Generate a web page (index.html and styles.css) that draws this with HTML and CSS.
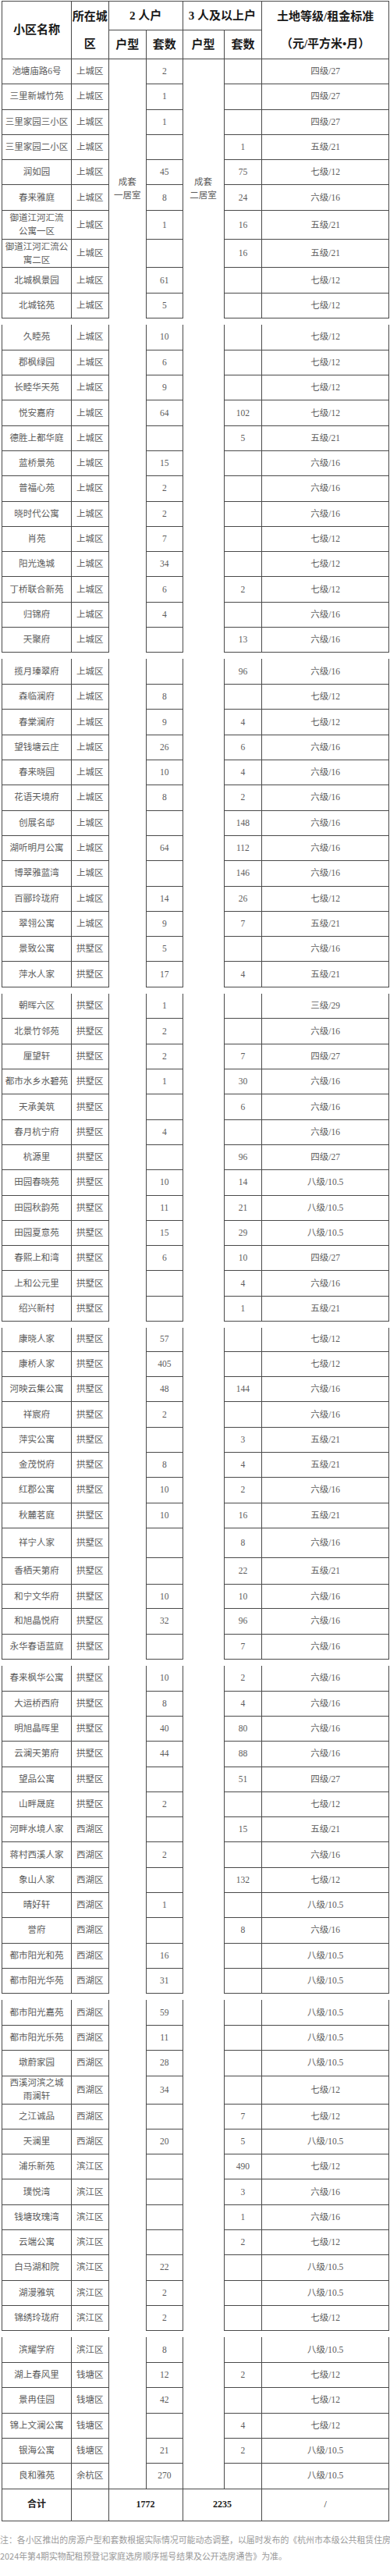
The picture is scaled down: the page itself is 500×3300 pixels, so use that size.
FILE: index.html
```html
<!DOCTYPE html>
<html lang="zh-CN">
<head>
<meta charset="utf-8">
<title>房源表</title>
<link rel="stylesheet" href="styles.css">
</head>
<body>
<main class="doc">
<div class="grid">

<table class="sec">
<colgroup><col class="c1"><col class="c2"><col class="c3"><col class="c4"><col class="c5"><col class="c6"><col class="c7"></colgroup>
<thead>
<tr class="hr"><th rowspan="2">小区名称</th><th rowspan="2" class="two">所在城<br>区</th><th colspan="2">2 人户</th><th colspan="2">3 人及以上户</th><th rowspan="2" class="two">土地等级/租金标准<br>（元/平方米•月）</th></tr>
<tr class="hr"><th>户型</th><th>套数</th><th>户型</th><th>套数</th></tr>
</thead>
<tbody>
<tr><td>池塘庙路6号</td><td>上城区</td><td class="m" rowspan="10">成套<br>一居室</td><td>2</td><td class="m" rowspan="10">成套<br>二居室</td><td></td><td>四级/27</td></tr>
<tr><td>三里新城竹苑</td><td>上城区</td><td>1</td><td></td><td>四级/27</td></tr>
<tr><td>三里家园三小区</td><td>上城区</td><td>1</td><td></td><td>四级/27</td></tr>
<tr><td>三里家园二小区</td><td>上城区</td><td></td><td>1</td><td>五级/21</td></tr>
<tr><td>润如园</td><td>上城区</td><td>45</td><td>75</td><td>七级/12</td></tr>
<tr><td>春来雅庭</td><td>上城区</td><td>8</td><td>24</td><td>六级/16</td></tr>
<tr class="h37"><td>御道江河汇流<br>公寓一区</td><td>上城区</td><td>1</td><td>16</td><td>五级/21</td></tr>
<tr class="h36"><td>御道江河汇流公<br>寓二区</td><td>上城区</td><td></td><td>16</td><td>五级/21</td></tr>
<tr><td>北城枫景园</td><td>上城区</td><td>61</td><td></td><td>七级/12</td></tr>
<tr><td>北城铭苑</td><td>上城区</td><td>5</td><td></td><td>七级/12</td></tr>
</tbody>
</table>

<table class="sec cont">
<colgroup><col class="c1"><col class="c2"><col class="c3"><col class="c4"><col class="c5"><col class="c6"><col class="c7"></colgroup>
<tbody>
<tr><td>久睦苑</td><td>上城区</td><td class="m" rowspan="13"></td><td>10</td><td class="m" rowspan="13"></td><td></td><td>七级/12</td></tr>
<tr><td>郡枫绿园</td><td>上城区</td><td>6</td><td></td><td>七级/12</td></tr>
<tr><td>长睦华天苑</td><td>上城区</td><td>9</td><td></td><td>七级/12</td></tr>
<tr><td>悦安嘉府</td><td>上城区</td><td>64</td><td>102</td><td>七级/12</td></tr>
<tr><td>德胜上都华庭</td><td>上城区</td><td></td><td>5</td><td>五级/21</td></tr>
<tr><td>蓝桥景苑</td><td>上城区</td><td>15</td><td></td><td>六级/16</td></tr>
<tr><td>普福心苑</td><td>上城区</td><td>2</td><td></td><td>六级/16</td></tr>
<tr><td>晓时代公寓</td><td>上城区</td><td>2</td><td></td><td>六级/16</td></tr>
<tr><td>肖苑</td><td>上城区</td><td>7</td><td></td><td>七级/12</td></tr>
<tr><td>阳光逸城</td><td>上城区</td><td>34</td><td></td><td>七级/12</td></tr>
<tr><td>丁桥联合新苑</td><td>上城区</td><td>6</td><td>2</td><td>七级/12</td></tr>
<tr><td>归锦府</td><td>上城区</td><td>4</td><td></td><td>六级/16</td></tr>
<tr><td>天聚府</td><td>上城区</td><td></td><td>13</td><td>六级/16</td></tr>
</tbody>
</table>

<table class="sec cont">
<colgroup><col class="c1"><col class="c2"><col class="c3"><col class="c4"><col class="c5"><col class="c6"><col class="c7"></colgroup>
<tbody>
<tr><td>揽月瑧翠府</td><td>上城区</td><td class="m" rowspan="13"></td><td></td><td class="m" rowspan="13"></td><td>96</td><td>六级/16</td></tr>
<tr><td>森临澜府</td><td>上城区</td><td>8</td><td></td><td>七级/12</td></tr>
<tr><td>春棠澜府</td><td>上城区</td><td>9</td><td>4</td><td>七级/12</td></tr>
<tr><td>望钱塘云庄</td><td>上城区</td><td>26</td><td>6</td><td>六级/16</td></tr>
<tr><td>春来晓园</td><td>上城区</td><td>10</td><td>4</td><td>六级/16</td></tr>
<tr><td>花语天境府</td><td>上城区</td><td>8</td><td>2</td><td>六级/16</td></tr>
<tr><td>创展名邸</td><td>上城区</td><td></td><td>148</td><td>六级/16</td></tr>
<tr><td>湖听明月公寓</td><td>上城区</td><td>64</td><td>112</td><td>六级/16</td></tr>
<tr><td>博翠雅蓝湾</td><td>上城区</td><td></td><td>146</td><td>六级/16</td></tr>
<tr><td>百郦玲珑府</td><td>上城区</td><td>14</td><td>26</td><td>七级/12</td></tr>
<tr><td>翠翎公寓</td><td>上城区</td><td>9</td><td>7</td><td>五级/21</td></tr>
<tr><td>景致公寓</td><td>拱墅区</td><td>5</td><td></td><td>六级/16</td></tr>
<tr><td>萍水人家</td><td>拱墅区</td><td>17</td><td>4</td><td>五级/21</td></tr>
</tbody>
</table>

<table class="sec cont">
<colgroup><col class="c1"><col class="c2"><col class="c3"><col class="c4"><col class="c5"><col class="c6"><col class="c7"></colgroup>
<tbody>
<tr><td>朝晖六区</td><td>拱墅区</td><td class="m" rowspan="13"></td><td>1</td><td class="m" rowspan="13"></td><td></td><td>三级/29</td></tr>
<tr><td>北景竹邻苑</td><td>拱墅区</td><td>2</td><td></td><td>六级/16</td></tr>
<tr><td>厘望轩</td><td>拱墅区</td><td>2</td><td>7</td><td>四级/27</td></tr>
<tr><td>都市水乡水碧苑</td><td>拱墅区</td><td>1</td><td>30</td><td>六级/16</td></tr>
<tr><td>天承美筑</td><td>拱墅区</td><td></td><td>6</td><td>六级/16</td></tr>
<tr><td>春月杭宁府</td><td>拱墅区</td><td>4</td><td></td><td>六级/16</td></tr>
<tr><td>杭源里</td><td>拱墅区</td><td></td><td>96</td><td>四级/27</td></tr>
<tr><td>田园春晓苑</td><td>拱墅区</td><td>10</td><td>14</td><td>八级/10.5</td></tr>
<tr><td>田园秋韵苑</td><td>拱墅区</td><td>11</td><td>21</td><td>八级/10.5</td></tr>
<tr><td>田园夏意苑</td><td>拱墅区</td><td>15</td><td>29</td><td>八级/10.5</td></tr>
<tr><td>春熙上和湾</td><td>拱墅区</td><td>6</td><td>10</td><td>四级/27</td></tr>
<tr><td>上和公元里</td><td>拱墅区</td><td></td><td>4</td><td>六级/16</td></tr>
<tr><td>绍兴新村</td><td>拱墅区</td><td></td><td>1</td><td>五级/21</td></tr>
</tbody>
</table>

<table class="sec cont">
<colgroup><col class="c1"><col class="c2"><col class="c3"><col class="c4"><col class="c5"><col class="c6"><col class="c7"></colgroup>
<tbody>
<tr class="h30"><td>康晓人家</td><td>拱墅区</td><td class="m" rowspan="13"></td><td>57</td><td class="m" rowspan="13"></td><td></td><td>七级/12</td></tr>
<tr><td>康桥人家</td><td>拱墅区</td><td>405</td><td></td><td>七级/12</td></tr>
<tr><td>河映云集公寓</td><td>拱墅区</td><td>48</td><td>144</td><td>六级/16</td></tr>
<tr><td>祥宸府</td><td>拱墅区</td><td>2</td><td></td><td>六级/16</td></tr>
<tr><td>萍实公寓</td><td>拱墅区</td><td></td><td>3</td><td>五级/21</td></tr>
<tr><td>金茂悦府</td><td>拱墅区</td><td>8</td><td>4</td><td>五级/21</td></tr>
<tr><td>红郡公寓</td><td>拱墅区</td><td>10</td><td>2</td><td>六级/16</td></tr>
<tr><td>秋麓茗庭</td><td>拱墅区</td><td>10</td><td>16</td><td>五级/21</td></tr>
<tr class="h38"><td>祥宁人家</td><td>拱墅区</td><td></td><td>8</td><td>六级/16</td></tr>
<tr class="h34"><td>香栖天第府</td><td>拱墅区</td><td></td><td>22</td><td>五级/21</td></tr>
<tr class="h31"><td>和宁文华府</td><td>拱墅区</td><td>10</td><td>10</td><td>六级/16</td></tr>
<tr><td>和旭晶悦府</td><td>拱墅区</td><td>32</td><td>96</td><td>六级/16</td></tr>
<tr><td>永华春语蓝庭</td><td>拱墅区</td><td></td><td>7</td><td>六级/16</td></tr>
</tbody>
</table>

<table class="sec cont">
<colgroup><col class="c1"><col class="c2"><col class="c3"><col class="c4"><col class="c5"><col class="c6"><col class="c7"></colgroup>
<tbody>
<tr><td>春来枫华公寓</td><td>拱墅区</td><td class="m" rowspan="13"></td><td>10</td><td class="m" rowspan="13"></td><td>2</td><td>六级/16</td></tr>
<tr><td>大运桥西府</td><td>拱墅区</td><td>8</td><td>4</td><td>六级/16</td></tr>
<tr><td>明旭晶晖里</td><td>拱墅区</td><td>40</td><td>80</td><td>六级/16</td></tr>
<tr><td>云澜天第府</td><td>拱墅区</td><td>44</td><td>88</td><td>六级/16</td></tr>
<tr><td>望品公寓</td><td>拱墅区</td><td></td><td>51</td><td>四级/27</td></tr>
<tr><td>山畔晟庭</td><td>拱墅区</td><td>2</td><td></td><td>七级/12</td></tr>
<tr><td>河畔水境人家</td><td>西湖区</td><td></td><td>15</td><td>五级/21</td></tr>
<tr><td>蒋村西溪人家</td><td>西湖区</td><td>2</td><td></td><td>六级/16</td></tr>
<tr><td>象山人家</td><td>西湖区</td><td></td><td>132</td><td>七级/12</td></tr>
<tr><td>晴好轩</td><td>西湖区</td><td>1</td><td></td><td>八级/10.5</td></tr>
<tr><td>誉府</td><td>西湖区</td><td></td><td>8</td><td>六级/16</td></tr>
<tr><td>都市阳光和苑</td><td>西湖区</td><td>16</td><td></td><td>八级/10.5</td></tr>
<tr><td>都市阳光华苑</td><td>西湖区</td><td>31</td><td></td><td>八级/10.5</td></tr>
</tbody>
</table>

<table class="sec cont">
<colgroup><col class="c1"><col class="c2"><col class="c3"><col class="c4"><col class="c5"><col class="c6"><col class="c7"></colgroup>
<tbody>
<tr><td>都市阳光嘉苑</td><td>西湖区</td><td class="m" rowspan="13"></td><td>59</td><td class="m" rowspan="13"></td><td></td><td>八级/10.5</td></tr>
<tr><td>都市阳光乐苑</td><td>西湖区</td><td>11</td><td></td><td>八级/10.5</td></tr>
<tr><td>墩蔚家园</td><td>西湖区</td><td>28</td><td></td><td>八级/10.5</td></tr>
<tr class="h36"><td>西溪河滨之城<br>雨澜轩</td><td>西湖区</td><td>34</td><td></td><td>七级/12</td></tr>
<tr><td>之江诚品</td><td>西湖区</td><td></td><td>7</td><td>七级/12</td></tr>
<tr><td>天澜里</td><td>西湖区</td><td>20</td><td>5</td><td>八级/10.5</td></tr>
<tr><td>浦乐新苑</td><td>滨江区</td><td></td><td>490</td><td>七级/12</td></tr>
<tr><td>璞悦湾</td><td>滨江区</td><td></td><td>3</td><td>六级/16</td></tr>
<tr><td>钱塘玫瑰湾</td><td>滨江区</td><td></td><td>1</td><td>六级/16</td></tr>
<tr><td>云端公寓</td><td>滨江区</td><td></td><td>2</td><td>七级/12</td></tr>
<tr><td>白马湖和院</td><td>滨江区</td><td>22</td><td></td><td>八级/10.5</td></tr>
<tr><td>湖漫雅筑</td><td>滨江区</td><td>2</td><td></td><td>八级/10.5</td></tr>
<tr><td>锦绣玲珑府</td><td>滨江区</td><td>2</td><td></td><td>七级/12</td></tr>
</tbody>
</table>

<table class="sec cont last">
<colgroup><col class="c1"><col class="c2"><col class="c3"><col class="c4"><col class="c5"><col class="c6"><col class="c7"></colgroup>
<tbody>
<tr><td>滨耀学府</td><td>滨江区</td><td class="m" rowspan="6"></td><td>8</td><td class="m" rowspan="6"></td><td></td><td>八级/10.5</td></tr>
<tr><td>湖上春风里</td><td>钱塘区</td><td>12</td><td>2</td><td>七级/12</td></tr>
<tr><td>景冉佳园</td><td>钱塘区</td><td>42</td><td></td><td>七级/12</td></tr>
<tr><td>锦上文澜公寓</td><td>钱塘区</td><td></td><td>4</td><td>七级/12</td></tr>
<tr><td>银海公寓</td><td>钱塘区</td><td>21</td><td>2</td><td>八级/10.5</td></tr>
<tr><td>良和雅苑</td><td>余杭区</td><td>270</td><td></td><td>八级/10.5</td></tr>
<tr class="total"><td>合计</td><td></td><td colspan="2">1772</td><td colspan="2">2235</td><td class="slash">/</td></tr>
</tbody>
</table>

</div>
<p class="note">注：各小区推出的房源户型和套数根据实际情况可能动态调整，以届时发布的《杭州市本级公共租赁住房<br>2024年第4期实物配租预登记家庭选房顺序摇号结果及公开选房通告》为准。</p>
</main>
</body>
</html>
```

FILE: styles.css
```css
html, body {
  margin: 0;
  padding: 0;
  background: #ffffff;
}

.doc {
  width: 500px;
}

.grid {
  padding: 1px 0 0 2px;
}

.sec {
  border-collapse: collapse;
  table-layout: fixed;
  width: 496px;
}

.sec + .sec {
  margin-top: 8px;
}

.c1 { width: 89px; }
.c2 { width: 47.6px; }
.c3 { width: 48.4px; }
.c4 { width: 46.6px; }
.c5 { width: 53px; }
.c6 { width: 48.7px; }
.c7 { width: 162.7px; }

.sec td,
.sec th {
  border: 1px solid #4a4a4a;
  padding: 0;
  text-align: center;
  vertical-align: middle;
  white-space: nowrap;
  font-family: "Liberation Serif", "Noto Sans CJK SC", serif;
  font-size: 11.5px;
  line-height: 17px;
  color: #5c5c5c;
}

.sec tr {
  height: 32.3px;
}

.sec th {
  font-size: 15px;
  font-weight: 700;
  line-height: 35px;
  color: #1a1a1a;
}

.sec tr.hr {
  height: 37px;
}

.sec tr.h37 { height: 37.6px; }
.sec tr.h36 { height: 36px; }
.sec tr.h38 { height: 38px; }
.sec tr.h34 { height: 34px; }
.sec tr.h31 { height: 31.3px; }
.sec tr.h30 { height: 30.3px; }

.sec td.m {
  border-bottom: none;
}

.cont tr:first-child td {
  border-top: none;
}

.sec tr.total {
  height: 41px;
}

.sec tr.total td {
  font-weight: 700;
  font-size: 12px;
  color: #222222;
}

.sec tr.total td.slash {
  font-weight: 400;
}

.note {
  margin: 13px 0 0 0;
  width: 500px;
  white-space: nowrap;
  font-family: "Noto Sans CJK SC", sans-serif;
  font-size: 10.9px;
  line-height: 21px;
  color: #9a9a9a;
}
```
